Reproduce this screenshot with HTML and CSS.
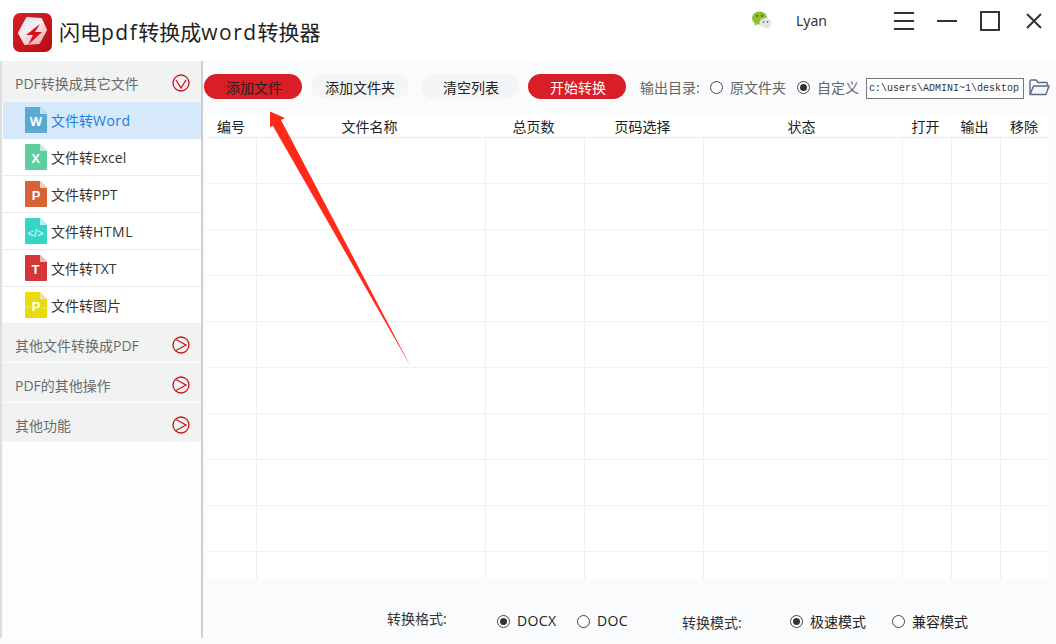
FILE: index.html
```html
<!DOCTYPE html>
<html lang="zh-CN">
<head>
<meta charset="utf-8">
<title>闪电pdf转换成word转换器</title>
<link rel="stylesheet" href="styles.css">
</head>
<body>
<div class="app">
  <header class="topbar">
    <div class="brand">
      <svg class="logo" viewBox="0 0 39 39" width="39" height="39">
        <defs>
          <linearGradient id="lg" x1="0" y1="0" x2="1" y2="1"><stop offset="0" stop-color="#d81f26"/><stop offset="1" stop-color="#b80d12"/></linearGradient>
          <linearGradient id="hx" x1="0.15" y1="0" x2="0.85" y2="1"><stop offset="0" stop-color="#d5e3fa"/><stop offset="0.4" stop-color="#fbeef0"/><stop offset="1" stop-color="#eca9ae"/></linearGradient>
        </defs>
        <rect width="39" height="39" rx="7" fill="url(#lg)"/>
        <path d="M14 5 L28 6 L33 17 L26 30 L12 31 L6 20Z" fill="url(#hx)" stroke="url(#hx)" stroke-width="2" stroke-linejoin="round"/>
        <path d="M27 11 L13 22 L20 22 L15 32 L29 19 L22 19Z" fill="#d3141c"/>
      </svg>
      <h1 class="title">闪电<span class="title-lt">pdf</span>转换成<span class="title-lt">word</span>转换器</h1>
    </div>
    <div class="user">
      <svg class="wechat" viewBox="0 0 22 20" width="22" height="20">
        <ellipse cx="8.5" cy="8" rx="7.5" ry="6.6" fill="#8fbf2e"/>
        <path d="M4 12 L3.5 16 L8 13Z" fill="#8fbf2e"/>
        <circle cx="6" cy="6" r="1.1" fill="#4a6a10"/><circle cx="11" cy="6" r="1.1" fill="#4a6a10"/>
        <ellipse cx="14.5" cy="13" rx="6" ry="5" fill="#e6e6e6"/>
        <path d="M17 16.5 L18.5 20 L14 17.5Z" fill="#e6e6e6"/>
        <circle cx="12.5" cy="12" r=".9" fill="#777"/><circle cx="16.5" cy="12" r=".9" fill="#777"/>
      </svg>
      <span class="username">Lyan</span>
    </div>
    <div class="winctl">
      <svg viewBox="0 0 20 20" width="20" height="20" class="ctl-menu"><path d="M0 2H20M0 10H20M0 18H20" stroke="#333" stroke-width="2"/></svg>
      <svg viewBox="0 0 20 20" width="20" height="20" class="ctl-min"><path d="M0 10H20" stroke="#333" stroke-width="2"/></svg>
      <svg viewBox="0 0 20 20" width="20" height="20" class="ctl-max"><rect x="1" y="1" width="18" height="18" fill="none" stroke="#333" stroke-width="2"/></svg>
      <svg viewBox="0 0 18 18" width="18" height="18" class="ctl-close"><path d="M2 2L16 16M16 2L2 16" stroke="#333" stroke-width="2"/></svg>
    </div>
  </header>

  <div class="body">
    <aside class="sidebar">
      <div class="group group-first"><span>PDF转换成其它文件</span>
        <svg class="chev" viewBox="0 0 18 18" width="18" height="18"><circle cx="9" cy="9" r="8" fill="none" stroke="#c8161d" stroke-width="1.3"/><path d="M4 6L9 14L14 6" fill="none" stroke="#c8161d" stroke-width="1.3"/></svg>
      </div>
      <a class="item active">
        <svg class="ficon" viewBox="0 0 22 26" width="22" height="26"><path d="M1 0H15L22 7V25a1 1 0 0 1-1 1H1a1 1 0 0 1-1-1V1a1 1 0 0 1 1-1Z" fill="#5aa9cf"/><path d="M15 0L22 7H15Z" fill="#c5e0ee"/><text x="11" y="19" class="ficon-t">W</text></svg>
        <span>文件转<b class="lt">Word</b></span></a>
      <a class="item">
        <svg class="ficon" viewBox="0 0 22 26" width="22" height="26"><path d="M1 0H15L22 7V25a1 1 0 0 1-1 1H1a1 1 0 0 1-1-1V1a1 1 0 0 1 1-1Z" fill="#5dce9e"/><path d="M15 0L22 7H15Z" fill="#c6eedd"/><text x="10.5" y="19" class="ficon-t">X</text></svg>
        <span>文件转Excel</span></a>
      <a class="item">
        <svg class="ficon" viewBox="0 0 22 26" width="22" height="26"><path d="M1 0H15L22 7V25a1 1 0 0 1-1 1H1a1 1 0 0 1-1-1V1a1 1 0 0 1 1-1Z" fill="#d66237"/><path d="M15 0L22 7H15Z" fill="#efcdbd"/><text x="11" y="19" class="ficon-t">P</text></svg>
        <span>文件转PPT</span></a>
      <a class="item">
        <svg class="ficon" viewBox="0 0 22 26" width="22" height="26"><path d="M1 0H15L22 7V25a1 1 0 0 1-1 1H1a1 1 0 0 1-1-1V1a1 1 0 0 1 1-1Z" fill="#35d6c6"/><path d="M15 0L22 7H15Z" fill="#bff0ea"/><text x="10.5" y="19" class="ficon-s">&lt;/&gt;</text></svg>
        <span>文件转<b class="lt">HTML</b></span></a>
      <a class="item">
        <svg class="ficon" viewBox="0 0 22 26" width="22" height="26"><path d="M1 0H15L22 7V25a1 1 0 0 1-1 1H1a1 1 0 0 1-1-1V1a1 1 0 0 1 1-1Z" fill="#d33538"/><path d="M15 0L22 7H15Z" fill="#eeb9ba"/><text x="10.5" y="19" class="ficon-t">T</text></svg>
        <span>文件转TXT</span></a>
      <a class="item item-last">
        <svg class="ficon" viewBox="0 0 22 26" width="22" height="26"><path d="M1 0H15L22 7V25a1 1 0 0 1-1 1H1a1 1 0 0 1-1-1V1a1 1 0 0 1 1-1Z" fill="#e8dc0e"/><path d="M15 0L22 7H15Z" fill="#e6e2b0"/><path d="M0 16Q3 13 6 15M16 16Q19 18 22 15" fill="none" stroke="#f6f1a0" stroke-width=".8"/><text x="11" y="19" class="ficon-t">P</text></svg>
        <span>文件转图片</span></a>
      <div class="group"><span>其他文件转换成PDF</span>
        <svg class="chev" viewBox="0 0 18 18" width="18" height="18"><circle cx="9" cy="9" r="8" fill="none" stroke="#c8161d" stroke-width="1.3"/><path d="M4 3.5L14 9L4 14.5" fill="none" stroke="#c8161d" stroke-width="1.3"/></svg>
      </div>
      <div class="group"><span>PDF的其他操作</span>
        <svg class="chev" viewBox="0 0 18 18" width="18" height="18"><circle cx="9" cy="9" r="8" fill="none" stroke="#c8161d" stroke-width="1.3"/><path d="M4 3.5L14 9L4 14.5" fill="none" stroke="#c8161d" stroke-width="1.3"/></svg>
      </div>
      <div class="group"><span>其他功能</span>
        <svg class="chev" viewBox="0 0 18 18" width="18" height="18"><circle cx="9" cy="9" r="8" fill="none" stroke="#c8161d" stroke-width="1.3"/><path d="M4 3.5L14 9L4 14.5" fill="none" stroke="#c8161d" stroke-width="1.3"/></svg>
      </div>
    </aside>

    <main class="main">
      <div class="toolbar">
        <button class="btn btn-red b1">添加文件</button>
        <button class="btn b2">添加文件夹</button>
        <button class="btn b3">清空列表</button>
        <button class="btn btn-start b4">开始转换</button>
        <span class="out-label">输出目录:</span>
        <span class="radio"></span><span class="out-opt o1">原文件夹</span>
        <span class="radio on"></span><span class="out-opt o2">自定义</span>
        <span class="path">c:\users\ADMINI~1\desktop</span>
        <svg class="folder" viewBox="0 0 21 17" width="21" height="17"><path d="M1 15V2.5Q1 1 2.5 1H7L9 3.5H17Q18.5 3.5 18.5 5V6.5" fill="none" stroke="#5c6b80" stroke-width="1.4"/><path d="M1 15.5L4.5 7H20L17 15.5Z" fill="#f2f5f9" stroke="#5c6b80" stroke-width="1.4" stroke-linejoin="round"/></svg>
      </div>

      <div class="table">
        <div class="row head">
          <div class="c c1">编号</div><div class="c c2">文件名称</div><div class="c c3">总页数</div><div class="c c4">页码选择</div><div class="c c5">状态</div><div class="c c6">打开</div><div class="c c7">输出</div><div class="c c8">移除</div>
        </div>
        <div class="row"><div class="c c1"></div><div class="c c2"></div><div class="c c3"></div><div class="c c4"></div><div class="c c5"></div><div class="c c6"></div><div class="c c7"></div><div class="c c8"></div></div>
        <div class="row"><div class="c c1"></div><div class="c c2"></div><div class="c c3"></div><div class="c c4"></div><div class="c c5"></div><div class="c c6"></div><div class="c c7"></div><div class="c c8"></div></div>
        <div class="row"><div class="c c1"></div><div class="c c2"></div><div class="c c3"></div><div class="c c4"></div><div class="c c5"></div><div class="c c6"></div><div class="c c7"></div><div class="c c8"></div></div>
        <div class="row"><div class="c c1"></div><div class="c c2"></div><div class="c c3"></div><div class="c c4"></div><div class="c c5"></div><div class="c c6"></div><div class="c c7"></div><div class="c c8"></div></div>
        <div class="row"><div class="c c1"></div><div class="c c2"></div><div class="c c3"></div><div class="c c4"></div><div class="c c5"></div><div class="c c6"></div><div class="c c7"></div><div class="c c8"></div></div>
        <div class="row"><div class="c c1"></div><div class="c c2"></div><div class="c c3"></div><div class="c c4"></div><div class="c c5"></div><div class="c c6"></div><div class="c c7"></div><div class="c c8"></div></div>
        <div class="row"><div class="c c1"></div><div class="c c2"></div><div class="c c3"></div><div class="c c4"></div><div class="c c5"></div><div class="c c6"></div><div class="c c7"></div><div class="c c8"></div></div>
        <div class="row"><div class="c c1"></div><div class="c c2"></div><div class="c c3"></div><div class="c c4"></div><div class="c c5"></div><div class="c c6"></div><div class="c c7"></div><div class="c c8"></div></div>
        <div class="row"><div class="c c1"></div><div class="c c2"></div><div class="c c3"></div><div class="c c4"></div><div class="c c5"></div><div class="c c6"></div><div class="c c7"></div><div class="c c8"></div></div>
        <div class="row last"><div class="c c1"></div><div class="c c2"></div><div class="c c3"></div><div class="c c4"></div><div class="c c5"></div><div class="c c6"></div><div class="c c7"></div><div class="c c8"></div></div>
      </div>

      <div class="footer">
        <span class="f-label fl1">转换格式:</span>
        <span class="radio on fr1"></span><span class="f-opt fo1">DOCX</span>
        <span class="radio fr2"></span><span class="f-opt fo2">DOC</span>
        <span class="f-label fl2">转换模式:</span>
        <span class="radio on fr3"></span><span class="f-opt fo3">极速模式</span>
        <span class="radio fr4"></span><span class="f-opt fo4">兼容模式</span>
      </div>
    </main>
  </div>

  <svg class="arrow" viewBox="0 0 150 260" width="150" height="260">
    <path d="M5 1.5L20 8L16 10L146 257L8 16L5 17Z" fill="#ff2a17"/>
  </svg>
</div>
</body>
</html>
```
FILE: styles.css
```css
* { box-sizing: border-box; }
html, body { margin: 0; padding: 0; }
body {
  width: 1056px;
  height: 644px;
  overflow: hidden;
  background: #fbfcfe;
  font-family: "Open Sans", "Noto Sans CJK SC", "Noto Sans", sans-serif;
  color: #222;
}
.app { position: relative; width: 1056px; height: 644px; display: flex; flex-direction: column; }

.topbar { height: 61px; display: flex; flex: none; background: #fff; }
.brand { display: flex; align-items: center; padding: 13px 0 9px 13px; width: 740px; }
.logo { flex: none; }
.title { margin: 0 0 0 7px; font-size: 21px; font-weight: 400; line-height: 39px; color: #222; white-space: nowrap; }
.title-lt { letter-spacing: 1.5px; }
.user { display: flex; width: 137px; padding: 10px 0 0 11px; }
.username { margin-left: 23px; font-family: "Noto Sans", sans-serif; font-size: 14px; line-height: 22px; color: #333; }
.wechat { flex: none; }
.winctl { display: flex; padding-top: 11px; align-items: flex-start; }
.ctl-menu { margin-left: 17px; }
.ctl-min { margin-left: 23px; }
.ctl-max { margin-left: 23px; }
.ctl-close { margin: 1px 0 0 25px; }

.body { display: flex; height: 577px; flex: none; }

.sidebar { width: 203px; flex: none; border-left: 2px solid #dcdee0; border-right: 2px solid #ccced2; background: #fcfdfe; }
.group { height: 40px; display: flex; align-items: center; justify-content: space-between; padding: 4px 11px 0 13px; background: #f1f3f3; border-bottom: 1px solid #fff; color: #6b6b6b; font-size: 14px; }
.group-first { height: 41px; border-bottom: 0; padding-top: 3px; }
.chev { flex: none; }
.item { height: 37px; display: flex; align-items: center; padding-left: 22px; border-bottom: 1px solid #ececef; font-size: 14px; color: #333; margin-left: 1px; background: #fff; }
.item.item-last { border-bottom: 0; height: 36px; }
.item > span { margin-left: 4px; }
.lt { font-weight: 400; letter-spacing: .5px; }
.item.active { background: #d6e9fb; color: #1a7fe0; border-bottom-color: #d6e9fb; }
.ficon { flex: none; }
.ficon-t { font-family: "Liberation Sans", sans-serif; font-size: 13px; font-weight: 700; fill: #fff; text-anchor: middle; }
.ficon-s { font-family: "Liberation Sans", sans-serif; font-size: 11px; fill: #e6fbf8; text-anchor: middle; }

.main { flex: 1; background: #f9fbfd; display: flex; flex-direction: column; min-width: 0; }

.toolbar { height: 53px; flex: none; display: flex; align-items: center; padding: 0 0 2px 1px; font-size: 14px; }
.btn { height: 25px; border: 0; border-radius: 13px; font: inherit; font-size: 14px; padding: 0; background: #f4f5f6; color: #222; }
.b1 { width: 98px; padding-left: 2px; }
.b2 { width: 98px; margin-left: 9px; }
.b3 { width: 98px; margin-left: 12px; padding-left: 2px; }
.b4 { width: 98px; margin-left: 9px; padding-left: 2px; }
.btn-red { background: #d81e27; color: #222; }
.btn-start { background: #d81e27; color: #fff; }
.out-label { margin-left: 14px; width: 62px; color: #666; white-space: nowrap; }
.radio { width: 13px; height: 13px; border: 1px solid #444; border-radius: 50%; background: #fff; flex: none; display: inline-block; position: relative; }
.radio.on::after { content: ""; position: absolute; left: 2px; top: 2px; width: 7px; height: 7px; border-radius: 50%; background: #333; }
.toolbar .radio { margin: 2px 0 0 8px; }
.out-opt { color: #666; margin-left: 7px; white-space: nowrap; }
.toolbar .on { margin-left: 11px; }
.path { margin: 3px 0 0 7px; width: 158px; height: 21px; border: 1px solid #777; background: #fff; font-family: "Liberation Mono", monospace; font-size: 10px; line-height: 19px; padding-left: 2px; color: #333; white-space: nowrap; overflow: hidden; }
.folder { margin: 1px 0 0 5px; flex: none; }

.table { margin-left: 4px; width: 842px; height: 464px; flex: none; background: #fff; }
.row { display: flex; height: 46px; border-bottom: 1px solid #f0f1f2; }
.row.head { height: 24px; font-size: 14px; border-bottom: 1px solid #e9eaec; line-height: 25px; color: #222; }
.row.last { height: 27px; border-bottom: 0; }
.c { flex: none; border-right: 1px solid #f0f1f2; text-align: center; }
.head .c { border-right: 0; padding-right: 4px; }
.head .c1, .head .c8 { padding-right: 2px; }
.c1 { width: 50px; }
.c2 { width: 229px; }
.c3 { width: 99px; }
.c4 { width: 119px; }
.c5 { width: 199px; }
.c6 { width: 49px; }
.c7 { width: 49px; }
.c8 { width: 48px; border-right: 0; }

.footer { flex: 1; display: flex; align-items: flex-start; font-size: 14px; padding-left: 184px; color: #333; }
.f-label { white-space: nowrap; width: 62px; flex: none; }
.f-opt { flex: none; color: #222; white-space: nowrap; }
.fl1 { margin-top: 30px; }
.fr1 { margin: 37px 0 0 48px; }
.fo1 { margin: 33px 0 0 7px; width: 40px; letter-spacing: .4px; }
.fr2 { margin: 37px 0 0 20px; }
.fo2 { margin: 33px 0 0 7px; width: 31px; letter-spacing: .4px; }
.fl2 { margin: 34px 0 0 54px; }
.fr3 { margin: 37px 0 0 46px; }
.fo3 { margin: 33px 0 0 7px; width: 56px; }
.fr4 { margin: 37px 0 0 26px; }
.fo4 { margin: 33px 0 0 7px; width: 56px; }

.arrow { position: absolute; left: 265px; top: 110px; pointer-events: none; }
```
